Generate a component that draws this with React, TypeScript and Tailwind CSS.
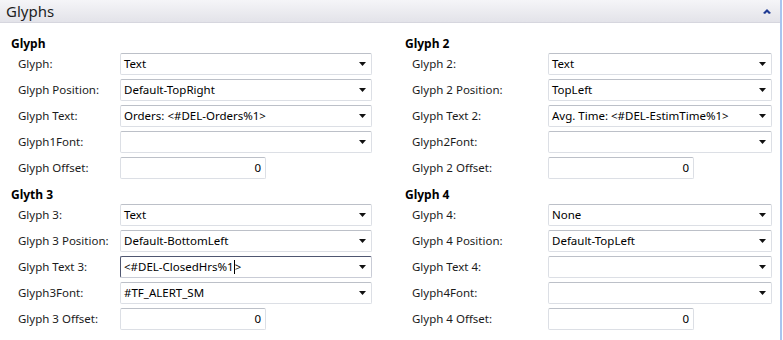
const font = { fontFamily: "'Noto Sans', 'Open Sans', sans-serif" };

type Row = {
  label: string;
  value?: string;
  kind: "select" | "number";
  focus?: boolean;
};

const Arrow = () => (
  <svg width="7" height="4" viewBox="0 0 7 4" className="shrink-0">
    <polygon points="0,0 7,0 3.5,4" fill="#111" />
  </svg>
);

const Field = ({ row, selectW }: { row: Row; selectW: string }) => {
  if (row.kind === "number") {
    return (
      <div className="flex h-[22px] w-[146px] items-center justify-end rounded-[2px] border border-[#dcdfe5] border-t-[#bcc0c8] bg-white pr-[4px] text-black">
        {row.value}
      </div>
    );
  }
  return (
    <div
      className={
        row.focus
          ? `flex h-[22px] ${selectW} items-center justify-between rounded-[2px] border border-[#c9ccd6] border-t-[#4f5670] border-l-[#4f5670] bg-white pl-[3px] pr-[5px] text-black`
          : `flex h-[22px] ${selectW} items-center justify-between rounded-[2px] border border-[#dcdfe5] border-t-[#bcc0c8] bg-white pl-[3px] pr-[5px] text-black`
      }
    >
      <span className="flex items-center whitespace-nowrap">
        {row.focus ? (
          <>
            <span>{"<#DEL-ClosedHrs%1"}</span>
            <span className="inline-block h-[14px] w-px bg-black" />
            <span>{">"}</span>
          </>
        ) : (
          row.value
        )}
      </span>
      <Arrow />
    </div>
  );
};

const Section = ({
  title,
  rows,
  labelW,
  selectW,
  first,
}: {
  title: string;
  rows: Row[];
  labelW: string;
  selectW: string;
  first?: boolean;
}) => (
  <div className={first ? "" : "mt-[8px]"}>
    <div className="mb-[1px] h-[16px] pl-[11px] text-[12px] font-bold leading-[16px] text-black">
      {title}
    </div>
    <div className="flex flex-col gap-[4px]">
      {rows.map((r) => (
        <div key={r.label} className="flex h-[22px] items-center">
          <div className={`${labelW} pl-[18px] text-[#1b1b1b]`}>{r.label}</div>
          <Field row={r} selectW={selectW} />
        </div>
      ))}
    </div>
  </div>
);

const App = () => {
  const g1: Row[] = [
    { label: "Glyph:", value: "Text", kind: "select" },
    { label: "Glyph Position:", value: "Default-TopRight", kind: "select" },
    { label: "Glyph Text:", value: "Orders: <#DEL-Orders%1>", kind: "select" },
    { label: "Glyph1Font:", value: "", kind: "select" },
    { label: "Glyph Offset:", value: "0", kind: "number" },
  ];
  const g2: Row[] = [
    { label: "Glyph 2:", value: "Text", kind: "select" },
    { label: "Glyph 2 Position:", value: "TopLeft", kind: "select" },
    { label: "Glyph Text 2:", value: "Avg. Time: <#DEL-EstimTime%1>", kind: "select" },
    { label: "Glyph2Font:", value: "", kind: "select" },
    { label: "Glyph 2 Offset:", value: "0", kind: "number" },
  ];
  const g3: Row[] = [
    { label: "Glyph 3:", value: "Text", kind: "select" },
    { label: "Glyph 3 Position:", value: "Default-BottomLeft", kind: "select" },
    { label: "Glyph Text 3:", value: "", kind: "select", focus: true },
    { label: "Glyph3Font:", value: "#TF_ALERT_SM", kind: "select" },
    { label: "Glyph 3 Offset:", value: "0", kind: "number" },
  ];
  const g4: Row[] = [
    { label: "Glyph 4:", value: "None", kind: "select" },
    { label: "Glyph 4 Position:", value: "Default-TopLeft", kind: "select" },
    { label: "Glyph Text 4:", value: "", kind: "select" },
    { label: "Glyph4Font:", value: "", kind: "select" },
    { label: "Glyph 4 Offset:", value: "0", kind: "number" },
  ];

  return (
    <div className="h-[340px] w-[783px] overflow-hidden bg-white text-[11.5px]" style={font}>
      <div className="h-full w-[782px] border-r-2 border-[#a8c5ef]">
        {/* Header */}
        <div className="flex h-[23px] items-center justify-between border-b border-[#d6d6de] bg-gradient-to-b from-[#f5f5f8] to-[#e3e3e9] pl-[6px] pr-[9px]">
          <span className="text-[15px] leading-none text-[#1e1e1e]">Glyphs</span>
          <svg width="8" height="5" viewBox="0 0 8 5">
            <polygon points="4,0 8,4 6,5 4,3 2,5 0,4" fill="#1f3a93" />
          </svg>
        </div>

        {/* Body */}
        <div className="grid grid-cols-[394px_1fr] pt-[13px]">
          <div>
            <Section title="Glyph" rows={g1} labelW="w-[120px]" selectW="w-[252px]" first />
            <Section title="Glyth 3" rows={g3} labelW="w-[120px]" selectW="w-[252px]" />
          </div>
          <div>
            <Section title="Glyph 2" rows={g2} labelW="w-[154px]" selectW="w-[224px]" first />
            <Section title="Glyph 4" rows={g4} labelW="w-[154px]" selectW="w-[224px]" />
          </div>
        </div>
      </div>
    </div>
  );
};

export default App;
